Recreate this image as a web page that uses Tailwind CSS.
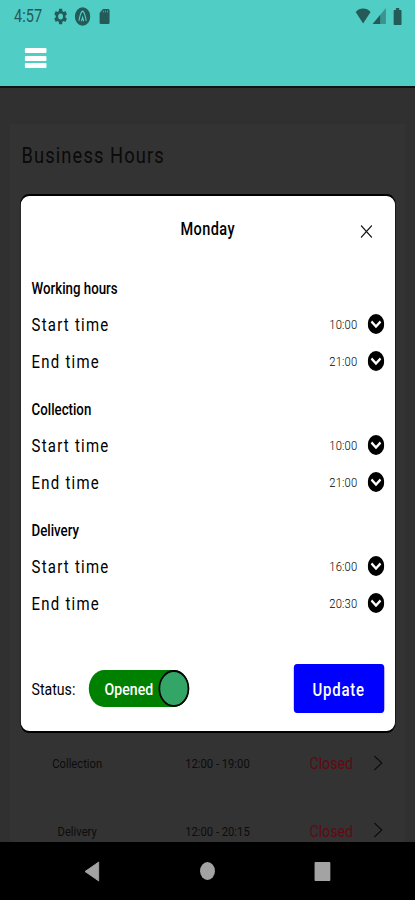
<!DOCTYPE html>
<html lang="en">
<head>
<meta charset="utf-8">
<title>Business Hours</title>
<script src="https://cdn.jsdelivr.net/npm/@tailwindcss/browser@4"></script>
</head>
<body class="bg-black">
<div class="w-[415px] h-[900px] overflow-hidden">
<div class="relative w-[500px] h-[900px] origin-top-left scale-x-[.83] flex flex-col overflow-hidden font-['Roboto',sans-serif] text-black whitespace-nowrap">

  <header class="h-[88px] shrink-0 bg-[#50cec6] border-b-2 border-[#101414]">
    <div class="h-8 flex items-center justify-between pl-[17px] pr-[16px] text-[#245a58]">
      <div class="flex items-center">
        <span class="w-[47px] text-[17.500px] leading-8">4:57</span>
        <svg class="w-[18px] h-[17px]" viewBox="1 1 22 22" fill="currentColor"><path d="M19.43 12.98c.04-.32.07-.64.07-.98s-.03-.66-.07-.98l2.11-1.65c.19-.15.24-.42.12-.64l-2-3.46c-.12-.22-.39-.3-.61-.22l-2.49 1c-.52-.4-1.08-.73-1.69-.98l-.38-2.65A.49.49 0 0 0 14 2h-4c-.25 0-.46.18-.49.42l-.38 2.65c-.61.25-1.17.59-1.69.98l-2.49-1c-.23-.09-.49 0-.61.22l-2 3.46c-.13.22-.07.49.12.64l2.11 1.65c-.04.32-.07.65-.07.98s.03.66.07.98l-2.11 1.65c-.19.15-.24.42-.12.64l2 3.46c.12.22.39.3.61.22l2.49-1c.52.4 1.08.73 1.69.98l.38 2.65c.03.24.24.42.49.42h4c.25 0 .46-.18.49-.42l.38-2.65c.61-.25 1.17-.59 1.69-.98l2.49 1c.23.09.49 0 .61-.22l2-3.46c.12-.22.07-.49-.12-.64zM12 15.800a3.800 3.800 0 1 1 0-7.600 3.800 3.800 0 0 1 0 7.600z" fill-rule="evenodd"/></svg>
        <svg class="ml-[8px] w-[19px] h-[19px]" viewBox="0 0 20 20"><circle cx="10" cy="10" r="9.800" fill="currentColor"/><path d="M5.500 14.500C6 11 8 4.500 10 4.500s4 6.500 4.500 10M8.500 15l1.500-4 1.500 4" fill="none" stroke="#50cec6" stroke-width="1.400"/></svg>
        <svg class="ml-[10px] w-[14px] h-[17px]" viewBox="0 0 14 17"><path d="M5 1h6.500A1.500 1.500 0 0 1 13 2.500v12a1.500 1.500 0 0 1-1.500 1.500h-9A1.500 1.500 0 0 1 1 14.500V5z" fill="currentColor"/><path d="M5.500 2.500v2M8 2.500v2M10.500 2.500v2" stroke="#50cec6" stroke-opacity=".6" stroke-width="1.200"/></svg>
      </div>
      <div class="flex items-center">
        <svg class="w-[19px] h-[16px]" viewBox="0 0 19 16"><path d="M9.500 15.500 0.500 4C3 1.700 6 .6 9.500.6S16 1.700 18.500 4z" fill="currentColor"/></svg>
        <svg class="ml-[2px] w-[16px] h-[16px]" viewBox="0 0 16 16"><path d="M0 16 16 0v16z" fill="currentColor" fill-opacity=".5"/><path d="M0 16 9 7v9z" fill="currentColor"/></svg>
        <svg class="ml-[9px] w-[10px] h-[17px]" viewBox="0 0 10 17"><path d="M3 0h4v2h2q1 0 1 1v13q0 1-1 1H1q-1 0-1-1V3q0-1 1-1h2z" fill="currentColor"/></svg>
      </div>
    </div>
    <div class="mt-4 ml-[30px] w-[26px] flex flex-col gap-[2.500px]">
      <i class="h-[5px] rounded-[1px] bg-white"></i>
      <i class="h-[5px] rounded-[1px] bg-white"></i>
      <i class="h-[5px] rounded-[1px] bg-white"></i>
    </div>
  </header>

  <main class="flex-1 bg-[#303030] px-[12px] pt-[36px]">
    <div class="h-full bg-[#333333] flex flex-col justify-between">
      <h1 class="pl-[14px] pt-[16px] text-[22px] leading-8 tracking-[1.350px] text-[#0a0a0a]">Business Hours</h1>
      <div class="text-[13.500px] text-[#0c0c0c]">
        <div class="h-[68px] flex items-center">
          <span class="w-[162px] text-center">Collection</span>
          <span class="w-[176px] text-center">12:00 - 19:00</span>
          <span class="w-[98px] pt-px text-center text-[17px] text-[#5f0a14]">Closed</span>
          <svg class="w-[15px] h-[16px]" viewBox="0 0 15 16" fill="none" stroke="currentColor" stroke-width="1.300"><path d="M3 1l9 7-9 7"/></svg>
        </div>
        <div class="h-[45px] pt-[22px] flex items-start overflow-hidden">
          <span class="w-[162px] text-center leading-[24px]">Delivery</span>
          <span class="w-[176px] text-center leading-[24px]">12:00 - 20:15</span>
          <span class="w-[98px] text-center text-[17px] leading-[24px] text-[#5f0a14]">Closed</span>
          <svg class="mt-[3px] w-[15px] h-[16px]" viewBox="0 0 15 16" fill="none" stroke="currentColor" stroke-width="1.300"><path d="M3 1l9 7-9 7"/></svg>
        </div>
      </div>
    </div>
  </main>

  <nav class="h-[58px] shrink-0 bg-black flex items-center justify-between pl-[101px] pr-[102px] text-[#a3a3a3]">
    <svg class="w-[19px] h-[21px]" viewBox="0 0 19 21" fill="currentColor"><path d="M18 1v19L1.500 10.500z" stroke="currentColor" stroke-linejoin="round"/></svg>
    <i class="w-[18px] h-[18px] rounded-full bg-[#a3a3a3]"></i>
    <i class="w-[19px] h-[19px] rounded-[1px] bg-[#a3a3a3]"></i>
  </nav>

  <section class="absolute left-[24px] top-[194px] w-[453px] h-[539px] rounded-[11px] border-x-[1.500px] border-y-2 border-black bg-white pl-[13px] pr-[13.500px]">
    <div class="relative h-[76px] pt-[20px] text-center">
      <h2 class="text-[17.500px] leading-[26px] font-medium tracking-[.5px]">Monday</h2>
      <svg class="absolute right-[14px] top-[29px] w-[15px] h-[13px]" viewBox="0 0 15 13" fill="none" stroke="#111" stroke-width="1.300"><path d="M1 .5l13 12M14 .5l-13 12"/></svg>
    </div>

    <div class="flex flex-col gap-[14px]">
      <div>
        <h3 class="h-[33px] leading-[34px] text-[16px] font-medium">Working hours</h3>
        <div class="h-[37px] flex items-center"><span class="flex-1 pt-px text-[18px] tracking-[1.500px]">Start time</span><span class="mr-[12px] pt-[2px] text-[13.500px] font-light tracking-[.2px]">10:00</span><svg class="w-5 h-5" viewBox="0 0 20 20"><circle cx="10" cy="10" r="10"/><path d="M4.500 7.500l5.500 5 5.500-5" fill="none" stroke="#fff" stroke-width="2.500"/></svg></div>
        <div class="h-[37px] flex items-center"><span class="flex-1 pt-px text-[18px] tracking-[1.500px]">End time</span><span class="mr-[12px] pt-[2px] text-[13.500px] font-light tracking-[.2px]">21:00</span><svg class="w-5 h-5" viewBox="0 0 20 20"><circle cx="10" cy="10" r="10"/><path d="M4.500 7.500l5.500 5 5.500-5" fill="none" stroke="#fff" stroke-width="2.500"/></svg></div>
      </div>
      <div>
        <h3 class="h-[33px] leading-[34px] text-[16px] font-medium">Collection</h3>
        <div class="h-[37px] flex items-center"><span class="flex-1 pt-px text-[18px] tracking-[1.500px]">Start time</span><span class="mr-[12px] pt-[2px] text-[13.500px] font-light tracking-[.2px]">10:00</span><svg class="w-5 h-5" viewBox="0 0 20 20"><circle cx="10" cy="10" r="10"/><path d="M4.500 7.500l5.500 5 5.500-5" fill="none" stroke="#fff" stroke-width="2.500"/></svg></div>
        <div class="h-[37px] flex items-center"><span class="flex-1 pt-px text-[18px] tracking-[1.500px]">End time</span><span class="mr-[12px] pt-[2px] text-[13.500px] font-light tracking-[.2px]">21:00</span><svg class="w-5 h-5" viewBox="0 0 20 20"><circle cx="10" cy="10" r="10"/><path d="M4.500 7.500l5.500 5 5.500-5" fill="none" stroke="#fff" stroke-width="2.500"/></svg></div>
      </div>
      <div>
        <h3 class="h-[33px] leading-[34px] text-[16px] font-medium">Delivery</h3>
        <div class="h-[37px] flex items-center"><span class="flex-1 pt-px text-[18px] tracking-[1.500px]">Start time</span><span class="mr-[12px] pt-[2px] text-[13.500px] font-light tracking-[.2px]">16:00</span><svg class="w-5 h-5" viewBox="0 0 20 20"><circle cx="10" cy="10" r="10"/><path d="M4.500 7.500l5.500 5 5.500-5" fill="none" stroke="#fff" stroke-width="2.500"/></svg></div>
        <div class="h-[37px] flex items-center"><span class="flex-1 pt-px text-[18px] tracking-[1.500px]">End time</span><span class="mr-[12px] pt-[2px] text-[13.500px] font-light tracking-[.2px]">20:30</span><svg class="w-5 h-5" viewBox="0 0 20 20"><circle cx="10" cy="10" r="10"/><path d="M4.500 7.500l5.500 5 5.500-5" fill="none" stroke="#fff" stroke-width="2.500"/></svg></div>
      </div>
    </div>

    <div class="mt-[43px] h-[49px] flex items-center">
      <span class="w-[69px] pt-[2px] text-[17px]">Status:</span>
      <div class="w-[121px] h-[37px] rounded-full bg-[#008000] flex items-center justify-between pl-[19px]">
        <span class="pt-[2px] text-[17px] font-medium text-white">Opened</span>
        <i class="w-[37px] h-[37px] rounded-full border-2 border-black bg-[#33a566]"></i>
      </div>
      <button class="ml-auto w-[109px] h-[49px] pt-[2px] rounded-[4px] bg-[#0000ff] text-[18px] font-medium tracking-[.9px] text-white">Update</button>
    </div>
  </section>
</div>
</div>
</body>
</html>
